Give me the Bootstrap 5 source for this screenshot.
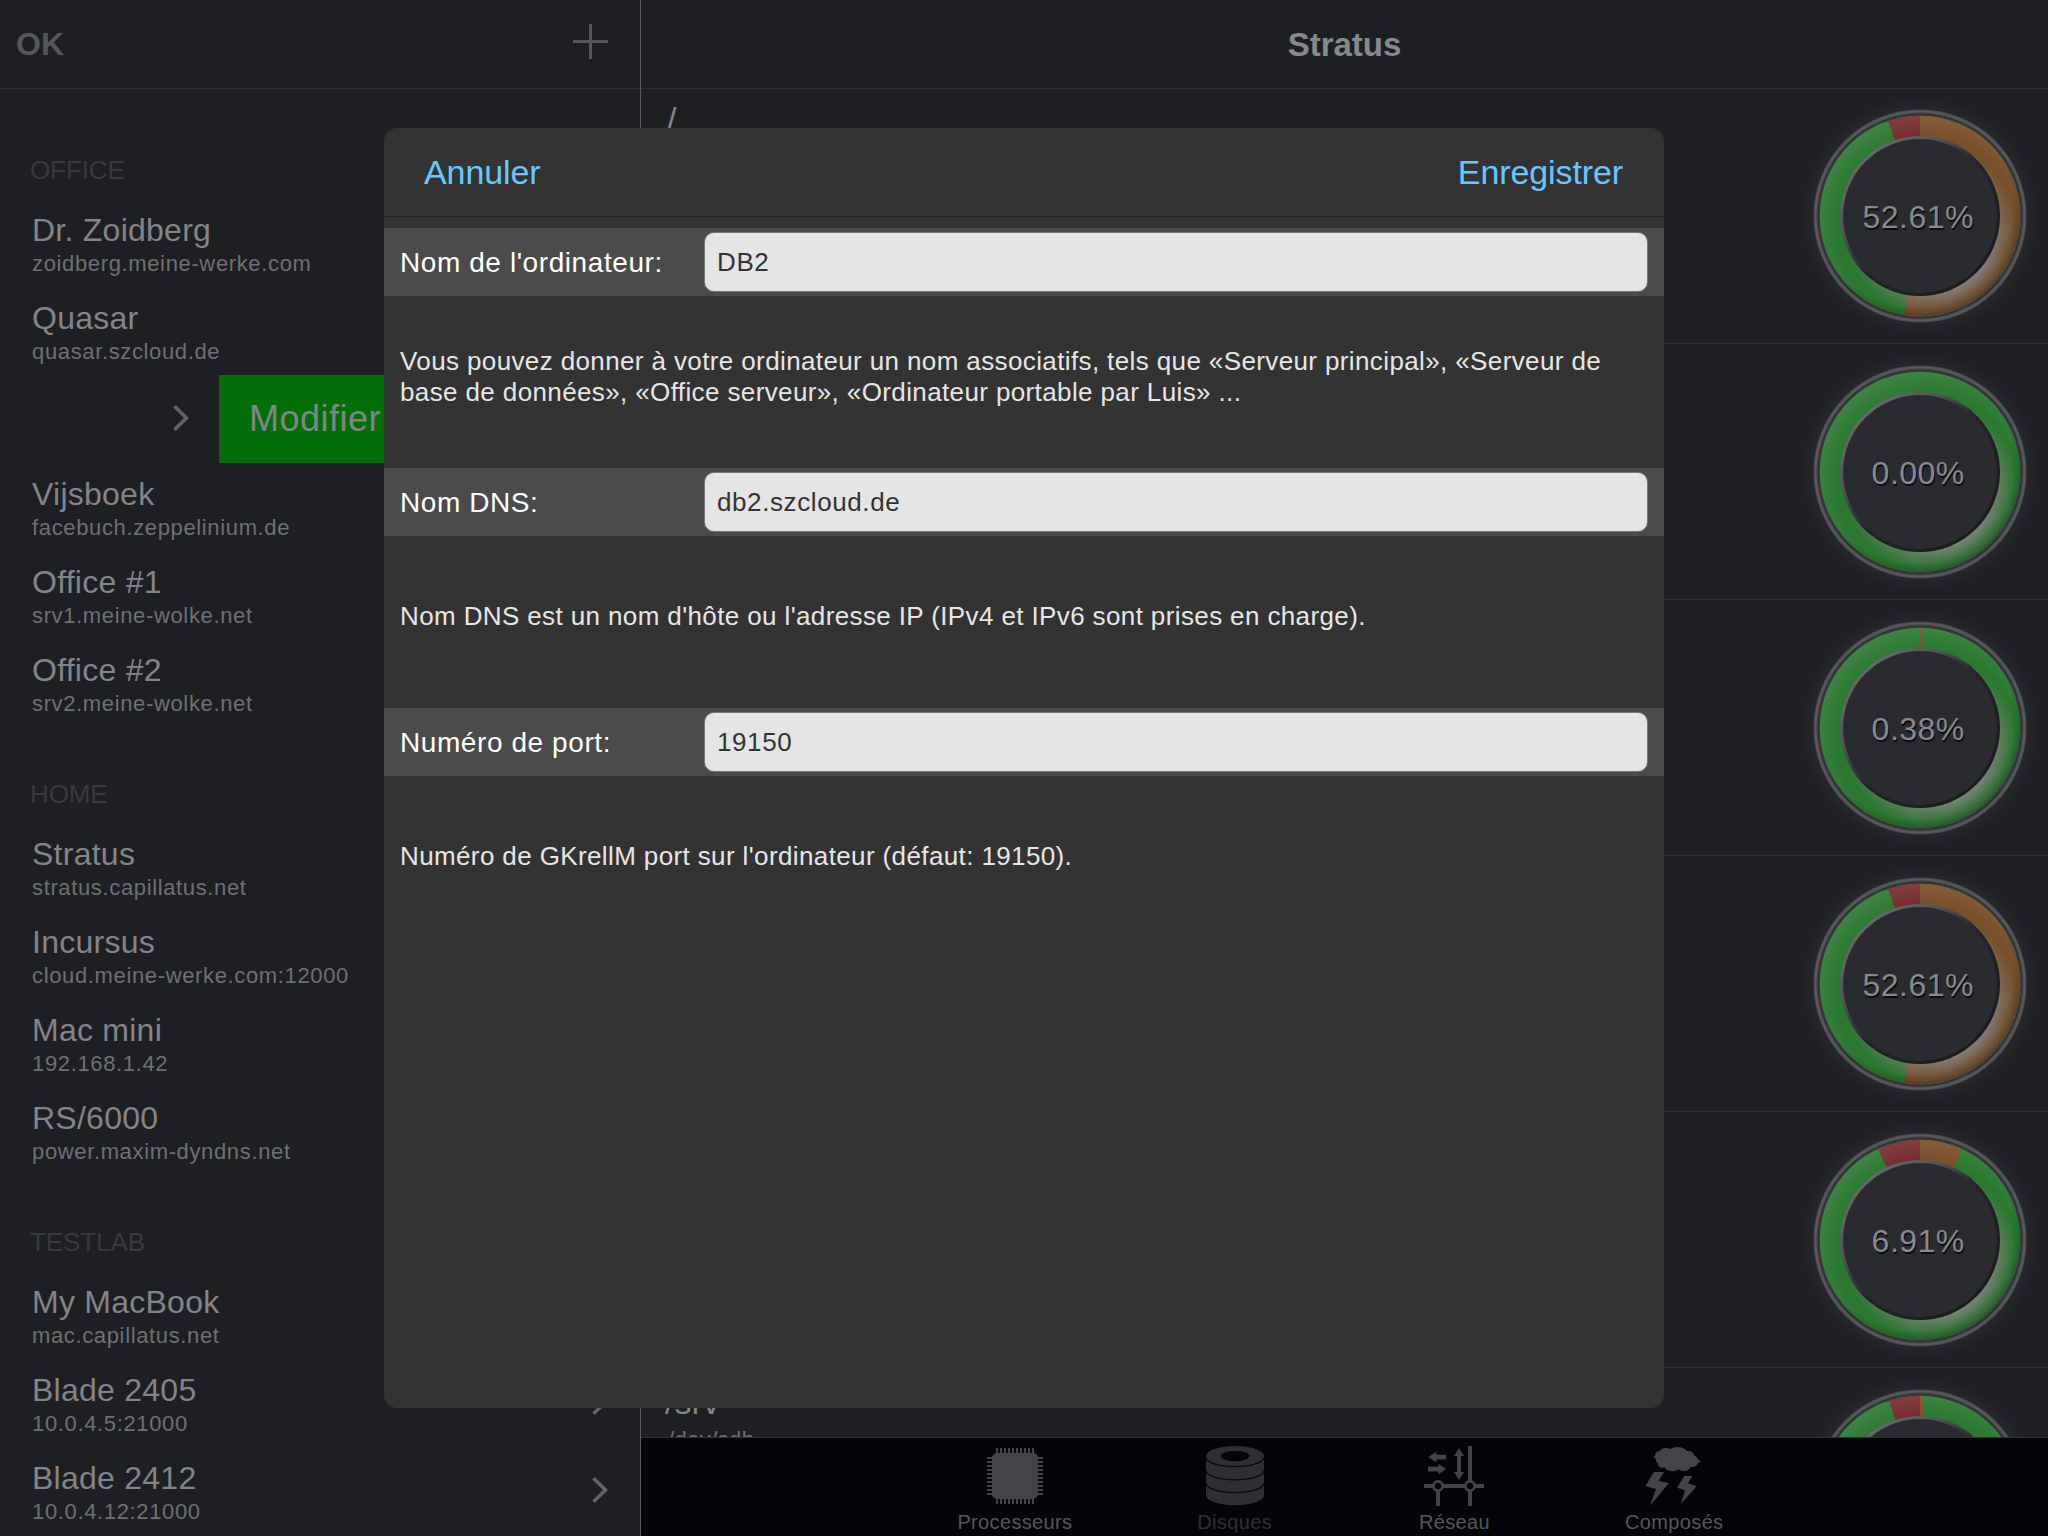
<!DOCTYPE html>
<html lang="fr">
<head>
<meta charset="utf-8">
<title>Stratus</title>
<link href="https://cdn.jsdelivr.net/npm/bootstrap@5.3.0/dist/css/bootstrap.min.css" rel="stylesheet">
<style>
html,body{height:100%}
body{font-family:"Liberation Sans",Arial,sans-serif;background:#1e1f23;color:#838488;overflow:hidden;line-height:1.2}
.app{width:2048px;height:1536px;overflow:hidden}
.side{width:641px;border-right:1px solid #59595c;flex:none;overflow:hidden}
.topbar{height:89px;border-bottom:1px solid #2f3034;flex:none}
.side .topbar{padding:0 32px 0 16px}
.okbtn{font-size:32px;font-weight:700;color:#55565a}
.plus{margin-bottom:6px}
.ttl{font-size:33px;font-weight:700;color:#88898c;padding-top:1px}
.grp{height:96px;padding:0 0 14px 30px;font-size:26px;color:#38393d;flex:none;letter-spacing:-.1px}
.grp span{line-height:30px}
.grp.first{height:110px}
.host{height:88px;padding:0 32px 0 32px;flex:none}
.host .nm{font-size:32px;line-height:36px;letter-spacing:.25px;padding-top:13px}
.host .ad{font-size:22px;line-height:26px;letter-spacing:.64px;color:#6f7074;margin-top:3px}
.chev{width:16px;height:26px;fill:none;stroke:#626366;stroke-width:3.6;margin-bottom:2px}
.swiped{padding:0 0 0 173px}
.edit{background:#036f08;font-size:36px;letter-spacing:.5px;width:421px;padding-left:30px}
.cell{height:256px;border-bottom:1px solid #2f3034;flex:none}
.cell.first{height:255px}
.cell.first .gauge{margin-top:-1px}
.lbl{padding-left:24px}
.lbl .mnt{font-size:34px;line-height:40px;padding-top:14px}
.cell.first .mnt{padding:10px 0 0 2px}
.lbl .dev{font-size:22px;line-height:26px;letter-spacing:.4px;color:#6f7074;padding:5px 0 0 3px}
.list{overflow:hidden;min-height:0}
.gauge{width:256px;height:256px;flex:none;overflow:visible}
.gauge text{font-size:32px;letter-spacing:.5px;text-anchor:middle;text-shadow:1px 1.5px 0 #0c0d10}
.tabs{height:99px;border-top:1px solid #2f3034;background:#040509;padding-left:264px;flex:none}
.tabitem{width:219.8px;font-size:20px;color:#55565a}
.tabitem svg{height:70px;width:80px;display:block;margin-top:2px;fill:#434448;stroke:none}
.tabitem span{line-height:24px;letter-spacing:.35px}
.tabitem.sel{color:#2e2f33}
.tabitem.sel svg{fill:#2e2f33}
.dlg{position:absolute;left:384px;top:128px;width:1280px;height:1280px;border-radius:13px;background:#333;overflow:hidden;color:#e6e6e6}
.dlghead{height:89px;border-bottom:1px solid #232323;padding:0 41px 0 40px;color:#66c8ff;font-size:34px;letter-spacing:-.1px;margin-bottom:11px}
.band{height:68px;background:#4b4b4b;padding:0 16px;font-size:28px;color:#fff}
.band label{width:304px;letter-spacing:.58px;padding-top:1px}
.band .form-control,.band .form-control:focus{width:auto;height:60px;border:1px solid #777;border-radius:10px;background:#e5e5e5;font-size:26px;letter-spacing:.6px;color:#333;padding:0 12px;box-shadow:none;flex:1}
.hint{height:172px;padding:0 16px 11px;font-size:26px;line-height:31px;letter-spacing:.38px;white-space:nowrap}
</style>
</head>
<body>
<svg width="0" height="0" class="position-absolute"><defs>
<radialGradient id="halo"><stop offset=".8" stop-color="#2c2d31"/><stop offset="1" stop-color="#1e1f23" stop-opacity="0"/></radialGradient>
<radialGradient id="glow" gradientUnits="userSpaceOnUse" cx="138" cy="141" r="90"><stop offset=".7" stop-color="#868686" stop-opacity=".85"/><stop offset=".82" stop-color="#808080" stop-opacity=".4"/><stop offset=".96" stop-color="#777" stop-opacity="0"/></radialGradient>
<radialGradient id="rim" gradientUnits="userSpaceOnUse" cx="121" cy="117" r="114"><stop offset=".88" stop-color="#000" stop-opacity="0"/><stop offset="1" stop-color="#000" stop-opacity=".3"/></radialGradient>
<radialGradient id="sheen" gradientUnits="userSpaceOnUse" cx="136" cy="142" r="118"><stop offset=".78" stop-color="#fff" stop-opacity="0"/><stop offset="1" stop-color="#fff" stop-opacity=".1"/></radialGradient>
<linearGradient id="bevel" x1=".1" y1=".1" x2=".85" y2=".85"><stop offset="0" stop-color="#6c6d70"/><stop offset=".3" stop-color="#505154"/><stop offset=".55" stop-color="#222327"/><stop offset="1" stop-color="#1b1c1f"/></linearGradient>
</defs></svg>
<div class="app d-flex position-relative">
<aside class="side d-flex flex-column" id="side">
<div class="topbar d-flex align-items-center justify-content-between"><span class="okbtn">OK</span>
<svg width="35" height="35" viewBox="0 0 35 35" class="plus"><path d="M17.5 0V35M0 17.5H35" stroke="#55565a" stroke-width="3"/></svg></div>
</aside>
<main class="d-flex flex-column flex-fill">
<div class="topbar d-flex align-items-center justify-content-center"><span class="ttl">Stratus</span></div>
<div class="list d-flex flex-column flex-fill" id="list"></div>
<nav class="tabs d-flex">
<div class="tabitem d-flex flex-column align-items-center"><svg viewBox="0 0 80 70"><rect x="17" y="13" width="46" height="46" rx="5"/><path d="M22 8V64M26 8V64M30 8V64M34 8V64M38 8V64M42 8V64M46 8V64M50 8V64M54 8V64M58 8V64M12 18H68M12 22H68M12 26H68M12 30H68M12 34H68M12 38H68M12 42H68M12 46H68M12 50H68M12 54H68" stroke="#434448" stroke-width="2"/></svg><span>Processeurs</span></div>
<div class="tabitem sel d-flex flex-column align-items-center"><svg viewBox="0 0 80 70"><path d="M11 16.3a29 10.3 0 0 1 58 0V55a29 10.3 0 0 1-58 0Z"/><ellipse cx="40" cy="16" rx="14.3" ry="5.3" fill="#040509"/><path d="M11 17.3a29 9.3 0 0 0 58 0M11 30.5a29 9.3 0 0 0 58 0M11 43.3a29 9.3 0 0 0 58 0" fill="none" stroke="#08090d" stroke-width="1.3"/></svg><span>Disques</span></div>
<div class="tabitem d-flex flex-column align-items-center"><svg viewBox="0 0 80 70"><path d="M10 46H70M24 46V66M56 6V66" stroke="#434448" stroke-width="4"/><circle cx="24" cy="46" r="4.6" fill="#040509" stroke="#434448" stroke-width="2.7"/><circle cx="56" cy="46" r="4.6" fill="#040509" stroke="#434448" stroke-width="2.7"/><path d="M45 8l5 8h-3v16h3l-5 8-5-8h3V16h-3ZM14.3 17l8-5.3v3H32v4.7h-9.7v3ZM32 29l-7.7-5.3v3H14v4.7h10.3v3Z"/></svg><span>Réseau</span></div>
<div class="tabitem d-flex flex-column align-items-center"><svg viewBox="0 0 80 70"><path d="M19.3 17Q21.500 16 21.500 14Q22 11 26 11Q27 8 31 8Q34 7.500 36 9Q42 5.500 50 8.500Q52 9 52.500 11Q59 10.500 60.500 16Q63.500 16.500 64 19.500L67 21.300L64 23Q63 27.500 56.500 27Q55 31 50 31Q47 31 45 29.500Q39 32.500 33 30Q31.500 29 31 27.500Q27 28.500 25 26.500Q23.500 25 24 23Q21.500 22 22 19Z"/><path d="M20 32H30L24.700 40.700L34.700 43.300L16 65.700L22 49L11.300 46ZM50.300 36H58.300L54 43.300L62.700 46.300L47 63.700L51 50.300L43 47.700Z"/></svg><span>Composés</span></div>
</nav>
</main>
<form class="dlg">
<div class="dlghead d-flex align-items-center justify-content-between"><span>Annuler</span><span>Enregistrer</span></div>
<div class="band d-flex align-items-center"><label for="f1">Nom de l'ordinateur:</label><input id="f1" class="form-control" value="DB2"></div>
<div class="hint d-flex align-items-center"><div>Vous pouvez donner à votre ordinateur un nom associatifs, tels que «Serveur principal», «Serveur de<br>base de données», «Office serveur», «Ordinateur portable par Luis» ...</div></div>
<div class="band d-flex align-items-center"><label for="f2">Nom DNS:</label><input id="f2" class="form-control" value="db2.szcloud.de"></div>
<div class="hint d-flex align-items-center"><div>Nom DNS est un nom d'hôte ou l'adresse IP (IPv4 et IPv6 sont prises en charge).</div></div>
<div class="band d-flex align-items-center"><label for="f3">Numéro de port:</label><input id="f3" class="form-control" value="19150"></div>
<div class="hint d-flex align-items-center"><div>Numéro de GKrellM port sur l'ordinateur (défaut: 19150).</div></div>
</form>
</div>
<script src="https://cdn.jsdelivr.net/npm/bootstrap@5.3.0/dist/js/bootstrap.bundle.min.js"></script>
<script>
const chev='<svg class="chev flex-shrink-0" viewBox="0 0 16 26"><path d="M1.500 1.200L13.500 13L1.500 24.800"/></svg>';
const groups=[
 ['OFFICE',[['Dr. Zoidberg','zoidberg.meine-werke.com'],['Quasar','quasar.szcloud.de'],null,['Vijsboek','facebuch.zeppelinium.de'],['Office #1','srv1.meine-wolke.net'],['Office #2','srv2.meine-wolke.net']]],
 ['HOME',[['Stratus','stratus.capillatus.net'],['Incursus','cloud.meine-werke.com:12000'],['Mac mini','192.168.1.42'],['RS/6000','power.maxim-dyndns.net']]],
 ['TESTLAB',[['My MacBook','mac.capillatus.net'],['Blade 2405','10.0.4.5:21000'],['Blade 2412','10.0.4.12:21000']]]];
document.getElementById('side').insertAdjacentHTML('beforeend',groups.map(([g,hs],i)=>
 `<div class="grp d-flex align-items-end${i?'':' first'}"><span>${g}</span></div>`+hs.map(h=>h
  ?`<div class="host d-flex justify-content-between align-items-center"><div class="align-self-start"><div class="nm">${h[0]}</div><div class="ad">${h[1]}</div></div>${chev}</div>`
  :`<div class="host swiped d-flex align-items-center justify-content-between">${chev}<div class="edit h-100 d-flex align-items-center">Modifier</div></div>`).join('')).join(''));

// Ring segment between two clockwise angles, in degrees from the top
function seg(a,b,color){
 const p=(r,t)=>(128+r*Math.sin(t*Math.PI/180)).toFixed(2)+' '+(128-r*Math.cos(t*Math.PI/180)).toFixed(2);
 const big=b-a>180?1:0;
 return `<path fill="${color}" d="M${p(100.3,a)}A100.3 100.3 0 ${big} 1 ${p(100.3,b)}L${p(79,b)}A79 79 0 ${big} 0 ${p(79,a)}Z"/>`;
}
function gauge(txt,used,red,tint){
 return `<svg class="gauge" viewBox="0 0 256 256"><circle cx="128" cy="128" r="127" fill="url(#halo)"/>
 <circle cx="128" cy="128" r="106.500" fill="#4b4c4f"/><circle cx="128" cy="128" r="104.700" fill="none" stroke="#58595c" stroke-width="1.600"/>
 <circle cx="128" cy="128" r="102.400" fill="#27282c"/><circle cx="128" cy="128" r="100.300" fill="#2b792f"/>
 ${used?seg(0,used,tint||'#785029'):''}${red?seg(-red,0,'#76292d'):''}
 <circle cx="128" cy="128" r="100.300" fill="url(#rim)"/><circle cx="128" cy="128" r="100.300" fill="url(#sheen)"/><circle cx="128" cy="128" r="100.300" fill="url(#glow)"/>
 <circle cx="128" cy="128" r="101" fill="none" stroke="#66676a" stroke-opacity=".4" stroke-width="1"/>
 <circle cx="128" cy="128" r="78.500" fill="#2a2b2f" stroke="url(#bevel)" stroke-width="3"/>
 ${txt?`<text x="126.200" y="140" fill="#88898c">${txt}</text>`:''}</svg>`;
}
const disks=[['/','','52.61%',189.4,18.5],['','','0.00%',0,0],['','','0.38%',1.4,0,'#8a4a30'],['','','52.61%',189.4,18.5],['','','6.91%',24.9,24.7],['/srv','/dev/sdb','',2.3,18]];
document.getElementById('list').innerHTML=disks.map((d,i)=>
 `<div class="cell d-flex justify-content-between${i?'':' first'}"><div class="lbl"><div class="mnt">${d[0]}</div><div class="dev">${d[1]}</div></div>${gauge(d[2],d[3],d[4],d[5])}</div>`).join('');
</script>
</body>
</html>
